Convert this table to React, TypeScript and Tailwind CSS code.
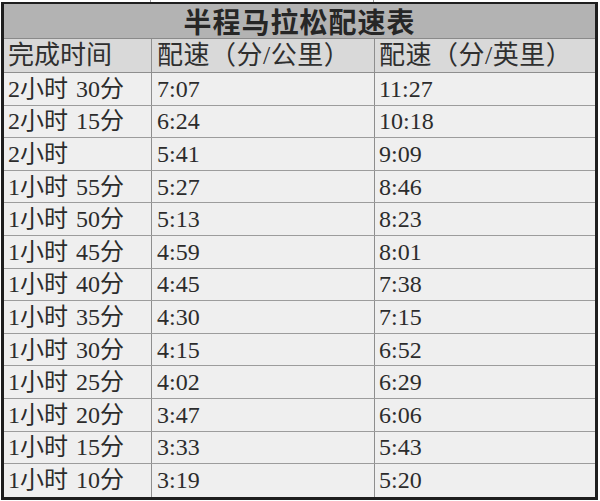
const rows: [string, string, string][] = [
  ["2小时 30分", "7:07", "11:27"],
  ["2小时 15分", "6:24", "10:18"],
  ["2小时", "5:41", "9:09"],
  ["1小时 55分", "5:27", "8:46"],
  ["1小时 50分", "5:13", "8:23"],
  ["1小时 45分", "4:59", "8:01"],
  ["1小时 40分", "4:45", "7:38"],
  ["1小时 35分", "4:30", "7:15"],
  ["1小时 30分", "4:15", "6:52"],
  ["1小时 25分", "4:02", "6:29"],
  ["1小时 20分", "3:47", "6:06"],
  ["1小时 15分", "3:33", "5:43"],
  ["1小时 10分", "3:19", "5:20"],
];

const serif = "font-['Liberation_Serif','Noto_Sans_CJK_SC',serif]";

export default function App() {
  return (
    <div className="w-[600px] h-[501px] bg-white overflow-hidden">
      {/* leftover of the row above the crop */}
      <div className="h-[2px] grid grid-cols-[151px_223px_1fr]">
        <div className="border-r border-[#9a9a9a]" />
        <div className="border-r border-[#9a9a9a]" />
        <div />
      </div>

      <div className="ml-[1px] w-[597px] border-l-[3px] border-r-[3px] border-t-2 border-b-[3px] border-[#1e1e1e]">
        {/* title */}
        <div className="h-[35px] bg-[#b3b3b3] border-b border-[#8a8a8a] flex items-center justify-center">
          <span className="font-['Noto_Sans_CJK_SC',sans-serif] font-bold text-[28px] leading-none text-[#262626] tracking-[1px]">
            半程马拉松配速表
          </span>
        </div>

        {/* header */}
        <div
          className={`h-[34px] bg-[#d9d9d9] grid grid-cols-[148px_223px_1fr] text-[26px] leading-none text-[#2f2f2f] border-b border-[#8e8e8e] ${serif}`}
        >
          <div className="flex items-center pl-[4px] border-r border-[#8e8e8e]">完成时间</div>
          <div className="flex items-center pl-[5px] border-r border-[#8e8e8e] tracking-[0.5px]">配速（分/公里）</div>
          <div className="flex items-center pl-[4px] tracking-[0.5px]">配速（分/英里）</div>
        </div>

        {/* data rows */}
        {rows.map(([time, km, mile], i) => (
          <div
            key={time}
            className={`h-[32.6px] bg-[#efefef] grid grid-cols-[148px_223px_1fr] text-[24px] leading-none text-[#2c2c2c] ${serif} ${
              i < rows.length - 1 ? "border-b border-[#9c9c9c]" : ""
            }`}
          >
            <div className="flex items-center pl-[4px] border-r border-[#8e8e8e] whitespace-pre [word-spacing:2px]">
              {time}
            </div>
            <div className="flex items-center pl-[5px] border-r border-[#8e8e8e]">{km}</div>
            <div className="flex items-center pl-[4px]">{mile}</div>
          </div>
        ))}
      </div>
    </div>
  );
}
